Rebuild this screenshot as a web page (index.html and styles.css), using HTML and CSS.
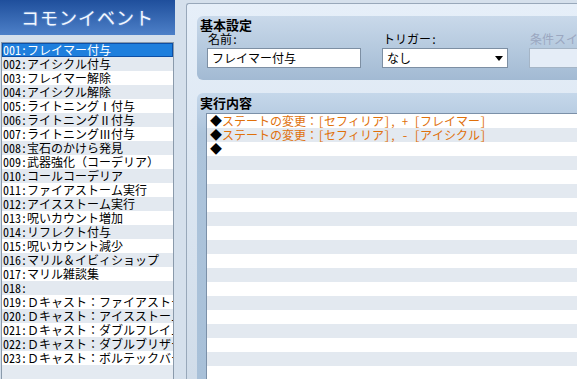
FILE: index.html
```html
<!DOCTYPE html>
<html lang="ja">
<head>
    <meta charset="UTF-8">
    <title>コモンイベント</title>
    <link rel="stylesheet" href="styles.css">
</head>
<body>
    <div class="app">
        <div class="sidebar">
            <div class="side-title">コモンイベント</div>
            <ul class="event-list">
                <li class="selected">001:フレイマー付与</li>
                <li>002:アイシクル付与</li>
                <li>003:フレイマー解除</li>
                <li>004:アイシクル解除</li>
                <li>005:ライトニングⅠ付与</li>
                <li>006:ライトニングⅡ付与</li>
                <li>007:ライトニングⅢ付与</li>
                <li>008:宝石のかけら発見</li>
                <li>009:武器強化（コーデリア）</li>
                <li>010:コールコーデリア</li>
                <li>011:ファイアストーム実行</li>
                <li>012:アイスストーム実行</li>
                <li>013:呪いカウント増加</li>
                <li>014:リフレクト付与</li>
                <li>015:呪いカウント減少</li>
                <li>016:マリル＆イビィショップ</li>
                <li>017:マリル雑談集</li>
                <li>018:</li>
                <li>019:Ｄキャスト：ファイアストーム</li>
                <li>020:Ｄキャスト：アイスストーム</li>
                <li>021:Ｄキャスト：ダブルフレイム</li>
                <li>022:Ｄキャスト：ダブルブリザード</li>
                <li>023:Ｄキャスト：ボルテックバースト</li>
            </ul>
        </div>

        <div class="main">
            <div class="frame">
                <section class="panel panel-basic">
                    <h2>基本設定</h2>
                    <div class="fields">
                        <div class="field field-name">
                            <label>名前:</label>
                            <div class="box">フレイマー付与</div>
                        </div>
                        <div class="field field-trigger">
                            <label>トリガー:</label>
                            <div class="box select">
                                <span>なし</span>
                                <svg width="8" height="5" viewBox="0 0 8 5"><path d="M0 0h8L4 5z" fill="#000"/></svg>
                            </div>
                        </div>
                        <div class="field field-switch">
                            <label>条件スイッチ</label>
                            <div class="box disabled"></div>
                        </div>
                    </div>
                </section>

                <section class="panel panel-exec">
                    <h2>実行内容</h2>
                    <ul class="command-list">
                        <li><b>◆</b>ステートの変更：[セフィリア], + [フレイマー]</li>
                        <li><b>◆</b>ステートの変更：[セフィリア], - [アイシクル]</li>
                        <li><b>◆</b></li>
                    </ul>
                </section>
            </div>
        </div>
    </div>
</body>
</html>
```

FILE: styles.css
```css
* { margin: 0; padding: 0; box-sizing: border-box; }

body {
    font-family: "Noto Sans Mono CJK JP", "Noto Sans CJK JP", sans-serif;
    font-size: 12px;
    color: #000;
    background: #d5e0ec;
    overflow: hidden;
}

.app {
    display: flex;
    height: 379px;
}

/* left: common event list */
.sidebar {
    width: 175px;
    display: flex;
    flex-direction: column;
}

.side-title {
    height: 35px;
    line-height: 35px;
    background: linear-gradient(#1f4f9c, #4d80c8);
    color: #f4f8ff;
    font-family: "Noto Sans CJK JP", sans-serif;
    font-size: 18px;
    letter-spacing: 1px;
    text-align: center;
    text-shadow: 0 0 2px #7fa9e0;
}

.event-list {
    list-style: none;
    flex: 1;
    width: 173px;
    margin: 7px 0 0 1px;
    background: #e4eaf1;
    border: 1px solid #8a9aab;
    border-bottom: none;
    overflow: hidden;
}

.event-list li {
    height: 14px;
    line-height: 14px;
    padding-left: 1px;
    white-space: nowrap;
    overflow: hidden;
    background: #fff;
}

.event-list li:nth-child(even) {
    background: #e3e9f0;
}

.event-list li.selected {
    background: #1e7fdd;
    color: #fff;
    box-shadow: inset 0 0 0 1px #0d4fa6;
}

/* right: editor */
.main {
    flex: 1;
    display: flex;
    padding: 3px 0 0 11px;
    min-width: 0;
}

.frame {
    flex: 1;
    display: flex;
    flex-direction: column;
    padding: 12px 0 0 10px;
    border-top: 1px solid #98a8ba;
    border-left: 1px solid #98a8ba;
    border-top-left-radius: 3px;
    background: linear-gradient(#e6eff9, #d0dce9);
    min-width: 0;
}

.panel {
    border-radius: 6px 0 0 6px;
}

.panel h2 {
    font-family: "Noto Sans CJK JP", sans-serif;
    font-size: 13px;
    font-weight: bold;
    line-height: 14px;
}

.panel-basic {
    height: 64px;
    padding: 2px 0 0 3px;
    background: linear-gradient(#c9d9ea, #a2bad3);
}

.fields {
    display: flex;
    padding-left: 7px;
}

.field label {
    display: block;
    line-height: 14px;
    padding-left: 1px;
    white-space: nowrap;
    overflow: hidden;
}

.field-name { width: 154px; margin-right: 21px; flex: none; }
.field-trigger { width: 126px; margin-right: 21px; flex: none; }
.field-switch { flex: 1; min-width: 0; }

.box {
    height: 20px;
    margin-top: 2px;
    line-height: 18px;
    padding-left: 4px;
    background: #fff;
    border: 1px solid #7d8fa3;
    white-space: nowrap;
}

.select {
    display: flex;
    align-items: center;
    justify-content: space-between;
    padding-right: 4px;
}

.field-switch label {
    color: #9ba7c0;
}

.box.disabled {
    background: #e5edf7;
    border-color: #a5b5c6;
    border-right: none;
}

.panel-exec {
    flex: 1;
    display: flex;
    flex-direction: column;
    margin-top: 13px;
    padding: 3px 0 0 3px;
    border-bottom-left-radius: 0;
    background: linear-gradient(#c5d7ea, #adc4db 40px, #a8c0d8);
}

.panel-exec h2 {
    margin-bottom: 3px;
}

.command-list {
    list-style: none;
    flex: 1;
    margin-left: 6px;
    border-top: 1px solid #7b90a8;
    border-left: 1px solid #7b90a8;
    background: repeating-linear-gradient(#fff 0 14px, #e3e9f0 14px 28px);
}

.command-list li {
    height: 14px;
    line-height: 14px;
    padding-left: 3px;
    white-space: nowrap;
    color: #e0700a;
}

.command-list b {
    font-weight: normal;
    color: #000;
}
```
